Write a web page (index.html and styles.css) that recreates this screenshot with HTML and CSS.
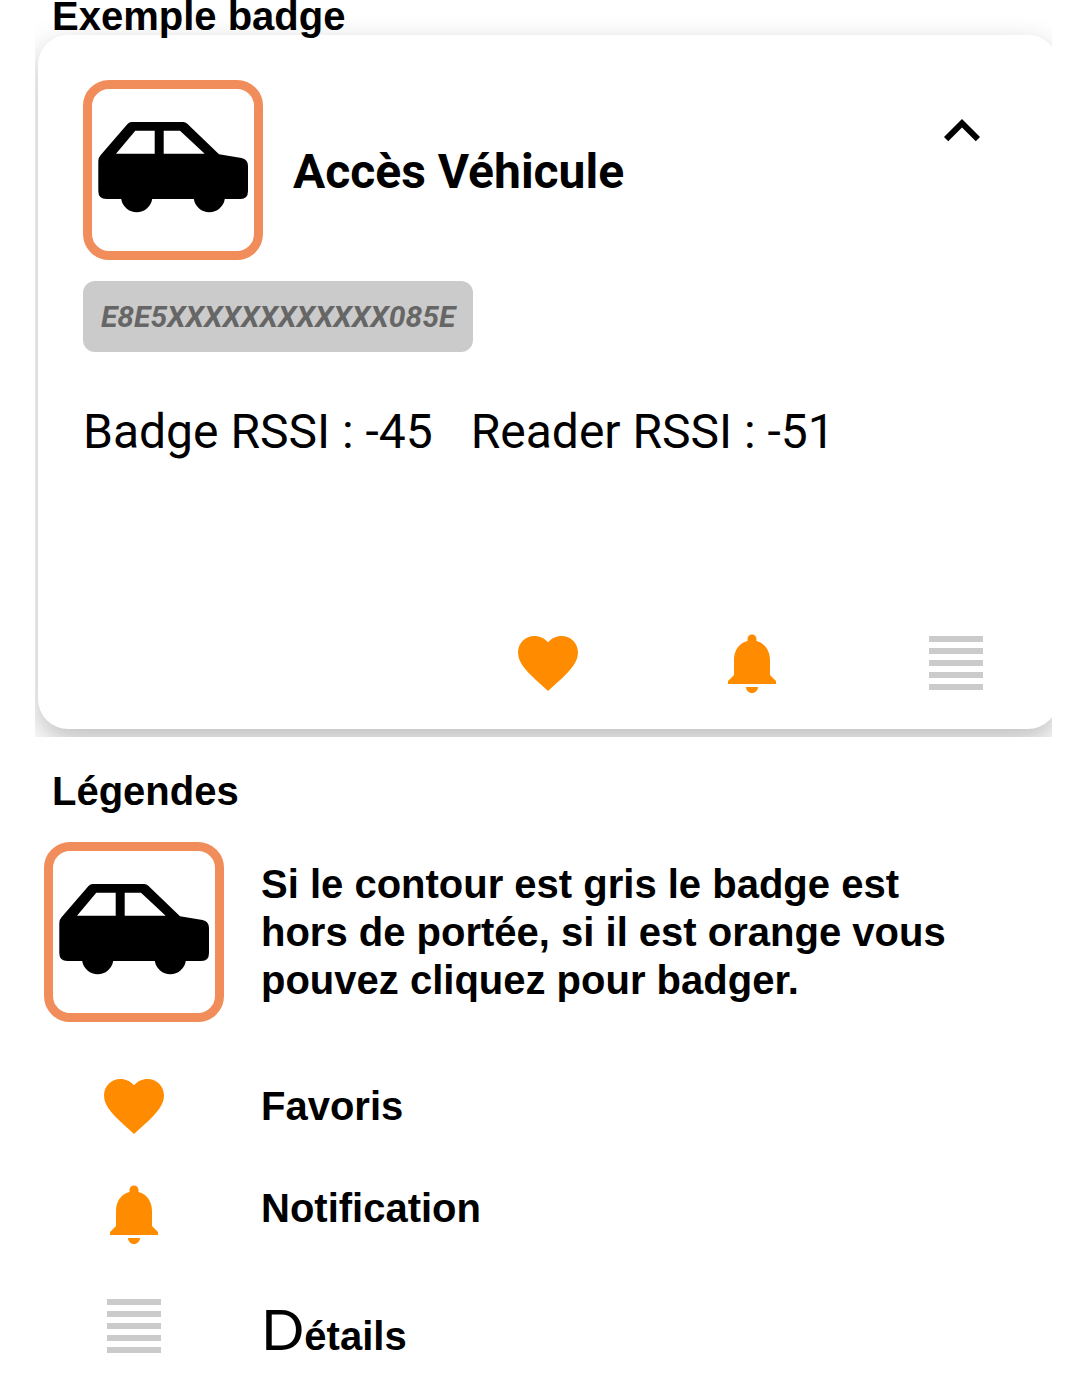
FILE: index.html
```html
<!DOCTYPE html>
<html lang="fr">
<head>
<meta charset="utf-8">
<meta name="viewport" content="width=device-width, initial-scale=1">
<title>Exemple badge</title>
<link rel="stylesheet" href="styles.css">
</head>
<body>
<svg class="symbols" aria-hidden="true">
  <symbol id="car" viewBox="9 9 162 162">
    <path fill-rule="evenodd" d="M48.700 42H100.300Q102.500 42 104.300 43.700L136 74.300L158.500 78Q165 79.500 165 86V111Q165 119 157.500 119H141.800A15.700 15.700 0 0 1 110.800 119H69.200A15.700 15.700 0 0 1 38.200 119H23.500Q15.300 119 15.300 111V81Q15.300 77.500 17.500 75.200L44.500 44Q46.300 42 48.700 42ZM52.300 50.700L33 73.700H71.700V50.700ZM80.700 50.700V73.700H121.700L97 50.700Z"/>
  </symbol>
  <symbol id="heart" viewBox="0 0 24 24">
    <path d="M12 21.350l-1.450-1.320C5.400 15.360 2 12.280 2 8.500 2 5.420 4.420 3 7.500 3c1.740 0 3.410.81 4.500 2.090C13.090 3.810 14.760 3 16.500 3 19.580 3 22 5.420 22 8.500c0 3.780-3.400 6.860-8.550 11.540L12 21.350z"/>
  </symbol>
  <symbol id="bell" viewBox="0 0 24 24">
    <path d="M12 22c1.100 0 2-.9 2-2h-4c0 1.100.89 2 2 2zm6-6v-5c0-3.070-1.640-5.640-4.500-6.320V4c0-.83-.67-1.500-1.500-1.500s-1.500.67-1.500 1.500v.68C7.630 5.360 6 7.920 6 11v5l-2 2v1h16v-1l-2-2z"/>
  </symbol>
  <symbol id="lines" viewBox="0 0 24 24">
    <path d="M3 3h18v2H3zM3 7h18v2H3zM3 11h18v2H3zM3 15h18v2H3zM3 19h18v2H3z"/>
  </symbol>
  <symbol id="chevron" viewBox="0 0 24 24">
    <path d="M12 8l-6 6 1.410 1.410L12 10.830l4.590 4.580L18 14z"/>
  </symbol>
</svg>

<section class="example">
  <h1 class="heading">Exemple badge</h1>
  <article class="card">
    <header class="card-head">
      <button class="badge" type="button" aria-label="Badger"><svg><use href="#car"/></svg></button>
      <h2 class="card-title">Accès Véhicule</h2>
      <button class="icon toggle" type="button" aria-label="Replier"><svg><use href="#chevron"/></svg></button>
    </header>
    <p class="tag">E8E5XXXXXXXXXXXX085E</p>
    <div class="signal">
      <span>Badge RSSI : -45</span>
      <span>Reader RSSI : -51</span>
    </div>
    <div class="actions">
      <button class="icon orange first" type="button" aria-label="Favoris"><svg><use href="#heart"/></svg></button>
      <button class="icon orange" type="button" aria-label="Notification"><svg><use href="#bell"/></svg></button>
      <button class="icon grey" type="button" aria-label="Détails"><svg><use href="#lines"/></svg></button>
    </div>
  </article>
</section>

<section class="legend">
  <h2 class="heading">Légendes</h2>
  <ul class="legend-list">
    <li class="legend-row main">
      <span class="badge"><svg><use href="#car"/></svg></span>
      <p class="legend-text">Si le contour est gris le badge est hors de portée, si il est orange vous pouvez cliquez pour badger.</p>
    </li>
    <li class="legend-row">
      <span class="icon orange"><svg><use href="#heart"/></svg></span>
      <p class="legend-text">Favoris</p>
    </li>
    <li class="legend-row">
      <span class="icon orange"><svg><use href="#bell"/></svg></span>
      <p class="legend-text raised">Notification</p>
    </li>
    <li class="legend-row last">
      <span class="icon grey"><svg><use href="#lines"/></svg></span>
      <p class="legend-text lowered"><span class="initial">D</span>étails</p>
    </li>
  </ul>
</section>
</body>
</html>
```
FILE: styles.css
```css
* {
  box-sizing: border-box;
  margin: 0;
  padding: 0;
}

body {
  background: #fff;
  color: #000;
  font-family: "Liberation Sans", Arial, sans-serif;
}

.symbols {
  display: none;
}

button {
  border: 0;
  background: none;
  color: inherit;
  cursor: pointer;
}

svg {
  display: block;
  width: 100%;
  height: 100%;
  fill: currentColor;
}

.heading {
  padding-left: 17px;
  font-size: 40px;
  font-weight: 700;
  line-height: 32px;
}

/* The card runs under the right edge of its frame, which clips the shadow. */
.example {
  margin: 0 28px 0 35px;
  padding-bottom: 8px;
  overflow: hidden;
}

.card {
  margin: 3px -6px 0 3px;
  padding: 45px 0 30px;
  border-radius: 30px;
  background: #fff;
  box-shadow: 0 12px 30px rgba(0, 0, 0, 0.26);
  font-family: Roboto, sans-serif;
}

.card-head {
  display: flex;
  align-items: center;
  gap: 30px;
  padding: 0 60px 0 45px;
}

.badge {
  flex: none;
  width: 180px;
  height: 180px;
  border: 9px solid #f08d5b;
  border-radius: 26px;
  background: #fff;
  color: #000;
}

.card-title {
  flex: 1;
  padding-top: 4px;
  font-size: 48px;
  font-weight: 700;
  line-height: 56px;
}

.icon {
  flex: none;
  width: 72px;
  height: 72px;
}

.toggle {
  align-self: flex-start;
  margin-top: 15px;
}

.orange {
  color: #ff8c00;
}

.grey {
  color: #cbcbcb;
}

.tag {
  width: fit-content;
  margin: 21px 45px 0;
  padding: 18px;
  border-radius: 12px;
  background: #cbcbcb;
  color: #666;
  font-size: 30px;
  font-style: italic;
  font-weight: 700;
  line-height: 35px;
}

.signal {
  display: flex;
  gap: 38px;
  margin: 52px 45px 0;
  font-size: 48px;
  line-height: 56px;
}

.actions {
  display: grid;
  grid-template-columns: repeat(5, 1fr);
  justify-items: center;
  margin-top: 167px;
}

.first {
  grid-column-start: 3;
}

.legend {
  padding: 38px 35px;
}

.legend-list {
  display: flex;
  flex-direction: column;
  gap: 36px;
  padding: 35px 9px 0;
  list-style: none;
}

.legend-row {
  display: grid;
  grid-template-columns: 180px 1fr;
  align-items: center;
  justify-items: center;
  gap: 37px;
}

.main {
  margin-bottom: 12px;
}

.last {
  min-height: 80px;
}

.legend-text {
  justify-self: start;
  max-width: 700px;
  font-size: 40px;
  font-weight: 700;
  line-height: 48px;
}

.raised {
  padding-bottom: 12px;
}

.lowered {
  padding-top: 12px;
}

.initial {
  font-family: Lato, sans-serif;
  font-size: 57px;
  font-weight: 400;
}
```
